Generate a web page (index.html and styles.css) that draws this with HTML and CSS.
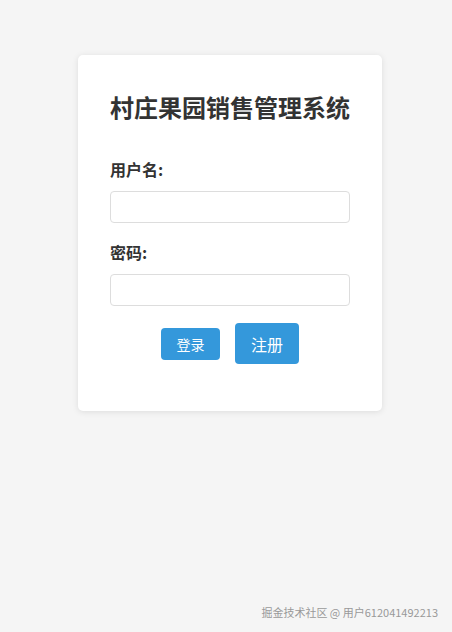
FILE: index.html
```html
<!DOCTYPE html>
<html lang="zh-CN">
<head>
<meta charset="utf-8">
<title>村庄果园销售管理系统</title>
<link rel="stylesheet" href="styles.css">
</head>
<body>
<div class="page">
  <div class="card">
    <h2 class="title">村庄果园销售管理系统</h2>
    <div class="field">
      <label class="label">用户名:</label>
      <input class="input" type="text">
    </div>
    <div class="field">
      <label class="label">密码:</label>
      <input class="input" type="password">
    </div>
    <div class="actions">
      <button class="btn btn-login">登录</button>
      <button class="btn btn-register">注册</button>
    </div>
  </div>
</div>
<div class="watermark">掘金技术社区 @ 用户612041492213</div>
</body>
</html>
```
FILE: styles.css
```css
html, body {
  margin: 0;
  padding: 0;
  height: 100%;
}
body {
  background: #f5f5f5;
  font-family: "Noto Sans CJK SC", "Noto Sans", sans-serif;
  color: #333;
  position: relative;
}
.page {
  display: flex;
  justify-content: center;
  padding: 55px 0 0 8px;
}
.card {
  width: 240px;
  padding: 32px 32px 47px;
  background: #fff;
  border-radius: 5px;
  box-shadow: 0 1px 6px rgba(0,0,0,0.1);
}
.title {
  margin: 0 0 30px;
  font-size: 24px;
  line-height: 40px;
  font-weight: 700;
  color: #333;
}
.field {
  margin-bottom: 17px;
}
.label {
  display: block;
  font-size: 16px;
  line-height: 24px;
  font-weight: 700;
  color: #333;
  margin-bottom: 10px;
}
.input {
  display: block;
  box-sizing: border-box;
  width: 240px;
  height: 32px;
  border: 1px solid #ddd;
  border-radius: 4px;
  background: #fff;
  margin: 0;
  padding: 0 8px;
}
.actions {
  display: flex;
  justify-content: center;
  align-items: center;
  gap: 15px;
  margin-top: 15px;
}
.btn {
  border: none;
  border-radius: 4px;
  background: #3498db;
  color: #fff;
  font-family: "Noto Sans CJK SC", sans-serif;
  padding: 0;
  margin: 0;
}
.btn-login {
  width: 59px;
  height: 32px;
  font-size: 14px;
}
.btn-register {
  width: 64px;
  height: 41px;
  font-size: 16px;
}
.watermark {
  position: absolute;
  right: 14px;
  bottom: 12px;
  font-size: 11px;
  color: #999;
  font-family: "Noto Sans CJK SC", sans-serif;
}
```
